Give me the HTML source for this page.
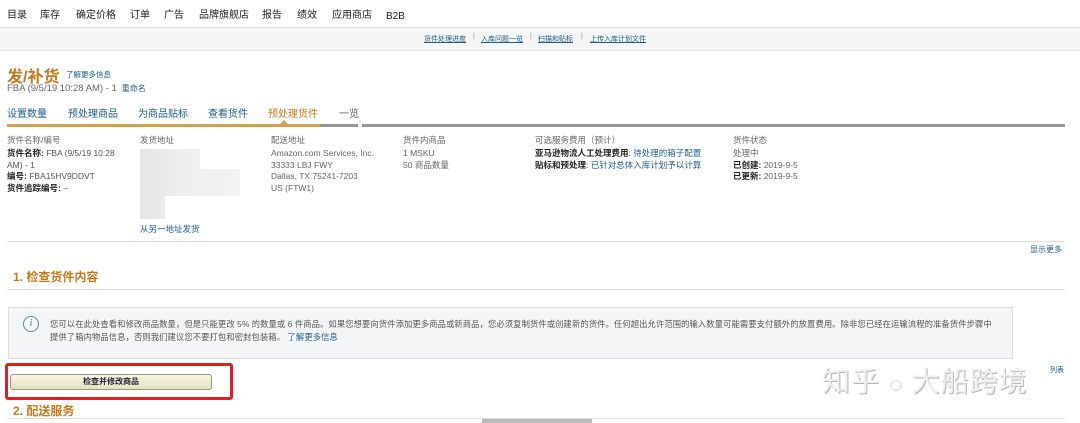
<!DOCTYPE html>
<html><head><meta charset="utf-8"><style>
body{margin:0;width:1080px;height:423px;overflow:hidden;background:#fff;font-family:"Liberation Sans","Noto Sans CJK SC",sans-serif;color:#333;position:relative}
.a{position:absolute;white-space:nowrap}
.b{color:#1f5c8a}
.g{color:#666}
.k{font-weight:bold;color:#222}
.n{top:9px;font-size:10px;line-height:14px;color:#222}
</style></head><body>
<div class="a" style="left:0;top:0;width:1080px;height:27px;border-bottom:1px solid #ddd"></div>
<div class="a n" style="left:7px">目录</div>
<div class="a n" style="left:40px">库存</div>
<div class="a n" style="left:76px">确定价格</div>
<div class="a n" style="left:130px">订单</div>
<div class="a n" style="left:164px">广告</div>
<div class="a n" style="left:199px">品牌旗舰店</div>
<div class="a n" style="left:262px">报告</div>
<div class="a n" style="left:297px">绩效</div>
<div class="a n" style="left:332px">应用商店</div>
<div class="a n" style="left:386px;top:10px">B2B</div>
<div class="a" style="left:0;top:28px;width:1080px;height:22px;background:#f5f5f5;border-bottom:1px solid #e4e4e4"></div>
<div class="a b" style="top:34px;left:424px;font-size:7px;text-decoration:underline">货件处理进度</div>
<div class="a" style="top:33px;left:473px;font-size:7px;color:#999">|</div>
<div class="a b" style="top:34px;left:481px;font-size:7px;text-decoration:underline">入库问题一览</div>
<div class="a" style="top:33px;left:530px;font-size:7px;color:#999">|</div>
<div class="a b" style="top:34px;left:538px;font-size:7px;text-decoration:underline">扫描和贴标</div>
<div class="a" style="top:33px;left:581px;font-size:7px;color:#999">|</div>
<div class="a b" style="top:34px;left:590px;font-size:7px;text-decoration:underline">上传入库计划文件</div>

<div class="a" style="top:63px;left:7px;font-size:16px;font-weight:bold;color:#c7791e">发/补货</div>
<div class="a b" style="top:69px;left:66px;font-size:7.5px">了解更多信息</div>
<div class="a g" style="top:83px;left:7px;font-size:9.5px">FBA (9/5/19 10:28 AM) - 1 <span class="b" style="font-size:8px">&nbsp;重命名</span></div>

<div class="a b" style="top:105px;left:7px;font-size:10px">设置数量</div>
<div class="a b" style="top:105px;left:68px;font-size:10px">预处理商品</div>
<div class="a b" style="top:105px;left:138px;font-size:10px">为商品贴标</div>
<div class="a b" style="top:105px;left:208px;font-size:10px">查看货件</div>
<div class="a" style="top:105px;left:268px;font-size:10px;color:#c7791e">预处理货件</div>
<div class="a g" style="top:105px;left:339px;font-size:10px">一览</div>
<div class="a" style="top:124px;left:7px;width:313px;height:3px;background:#d8a04a"></div>
<div class="a" style="top:120px;left:280px;width:0;height:0;border-left:4px solid transparent;border-right:4px solid transparent;border-bottom:4px solid #d8a04a"></div>
<div class="a" style="top:124px;left:320px;width:38px;height:3px;background:#999"></div>
<div class="a" style="top:124px;left:362px;width:703px;height:3px;background:#999"></div>

<div style="font-size:8.5px;line-height:11.5px">
<div class="a g" style="top:135px;left:7px">货件名称/编号</div>
<div class="a" style="top:148px;left:7px;white-space:normal;width:110px;color:#555"><b class="k">货件名称:</b> FBA (9/5/19 10:28 AM) - 1<br><b class="k">编号:</b> FBA15HV9DDVT<br><b class="k">货件追踪编号:</b> –</div>
<div class="a g" style="top:135px;left:140px">发货地址</div>
<div class="a" style="top:149px;left:140px;width:100px;height:70px;background:linear-gradient(90deg,#e6e6e6,#eee 40%,#f3f3f3)"></div>
<div class="a" style="top:149px;left:200px;width:40px;height:20px;background:#fff"></div>
<div class="a" style="top:196px;left:165px;width:75px;height:25px;background:#fff"></div>
<div class="a b" style="top:224px;left:140px">从另一地址发货</div>
<div class="a g" style="top:135px;left:271px">配送地址</div>
<div class="a g" style="top:148px;left:271px">Amazon.com Services, Inc.<br>33333 LBJ FWY<br>Dallas, TX 75241-7203<br>US (FTW1)</div>
<div class="a g" style="top:135px;left:403px">货件内商品</div>
<div class="a g" style="top:148px;left:403px">1 MSKU<br>50 商品数量</div>
<div class="a g" style="top:135px;left:535px">可选服务费用（预计）</div>
<div class="a" style="top:148px;left:535px"><b class="k">亚马逊物流人工处理费用</b>: <span class="b">待处理的箱子配置</span><br><b class="k">贴标和预处理</b>: <span class="b">已针对总体入库计划予以计算</span></div>
<div class="a g" style="top:135px;left:733px">货件状态</div>
<div class="a g" style="top:148px;left:733px">处理中<br><b class="k">已创建:</b> 2019-9-5<br><b class="k">已更新:</b> 2019-9-5</div>
</div>
<div class="a" style="top:241px;left:7px;width:1058px;height:1px;background:#ddd"></div>
<div class="a b" style="top:244px;left:1030px;font-size:8px">显示更多</div>

<div class="a" style="top:268px;left:13px;font-size:12px;font-weight:bold;color:#c7791e">1. 检查货件内容</div>
<div class="a" style="top:289px;left:7px;width:1058px;height:1px;background:#ddd"></div>

<div class="a" style="top:307px;left:8px;width:1003px;height:50px;background:#f3f5f6;border:1px solid #ddd"></div>
<div class="a" style="top:316px;left:23px;width:14px;height:14px;border:1px solid #5a8a9a;border-radius:50%;font:italic 10px 'Liberation Serif',serif;color:#4a7a8a;text-align:center;line-height:14px">i</div>
<div class="a" style="top:318px;left:50px;font-size:8.3px;line-height:13px;color:#555;letter-spacing:0.1px">您可以在此处查看和修改商品数量，但是只能更改 5% 的数量或 6 件商品。如果您想要向货件添加更多商品或新商品，您必须复制货件或创建新的货件。任何超出允许范围的输入数量可能需要支付额外的放置费用。除非您已经在运输流程的准备货件步骤中<br>提供了箱内物品信息，否则我们建议您不要打包和密封包装箱。 <span class="b">了解更多信息</span></div>

<div class="a" style="top:363px;left:5px;width:222px;height:31px;border:3px solid #e02020;border-radius:3px"></div>
<div class="a" style="top:374px;left:10px;width:200px;height:14px;border:1px solid #9a9a80;border-radius:3px;background:linear-gradient(#f8f6e6,#e4e0c0);font-size:8px;font-weight:bold;color:#223;text-align:center;line-height:14px">检查并修改商品</div>

<div class="a" style="top:402px;left:13px;font-size:12px;font-weight:bold;color:#c7791e">2. 配送服务</div>
<div class="a" style="top:418px;left:7px;width:1058px;height:1px;background:#ddd"></div>
<div class="a" style="top:419px;left:482px;width:110px;height:4px;background:#bbb"></div>

<div class="a" style="top:360px;left:822px;font-size:28px;color:#f0f0f0;text-shadow:1px 1px 0 #b8b8b8;letter-spacing:1px">知乎 <span style="font-size:22px">◌</span> 大船跨境</div>
<div class="a b" style="top:365px;left:1050px;font-size:7px">列表</div>
</body></html>
